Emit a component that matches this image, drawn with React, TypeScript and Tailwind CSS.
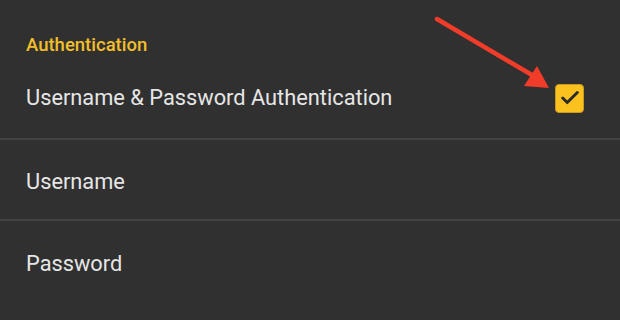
import { Check } from 'lucide-react';

const rows = [
  { label: 'Username', className: 'h-[81px] pt-[5px] border-b-2 border-[#434343]' },
  { label: 'Password', className: 'h-[82px] pt-[4px]' },
];

export default function App() {
  return (
    <main
      className="relative w-[620px] h-[320px] overflow-hidden bg-[#303030] text-[#e6e6e6]"
      style={{ fontFamily: 'Roboto, "Noto Sans", sans-serif' }}
    >
      {/* Section header */}
      <div className="h-[58px] pt-[35px] px-[26px] text-[18.5px] leading-[20px] font-medium text-[#f2bf2a]">
        Authentication
      </div>

      {/* Toggle row */}
      <div className="h-[82px] flex items-center justify-between pl-[26px] pr-[36px] border-b-2 border-[#434343]">
        <span className="text-[21.8px]">Username &amp; Password Authentication</span>
        <div className="w-[29px] h-[29px] rounded-[4px] bg-[#fbc21f] border border-[#c99a1c] flex items-center justify-center">
          <Check className="w-[22px] h-[22px] text-[#2a2a2a]" strokeWidth={3.2} />
        </div>
      </div>

      {rows.map((row) => (
        <div key={row.label} className={`flex items-center px-[26px] ${row.className}`}>
          <span className="text-[21.8px]">{row.label}</span>
        </div>
      ))}

      {/* Annotation arrow */}
      <svg className="absolute inset-0 pointer-events-none" width="620" height="320" viewBox="0 0 620 320">
        <path d="M437 19 L532 75" stroke="#f23c2a" strokeWidth="4.5" strokeLinecap="round" />
        <polygon points="549,88 524,86 537,66" fill="#f23c2a" />
      </svg>
    </main>
  );
}
